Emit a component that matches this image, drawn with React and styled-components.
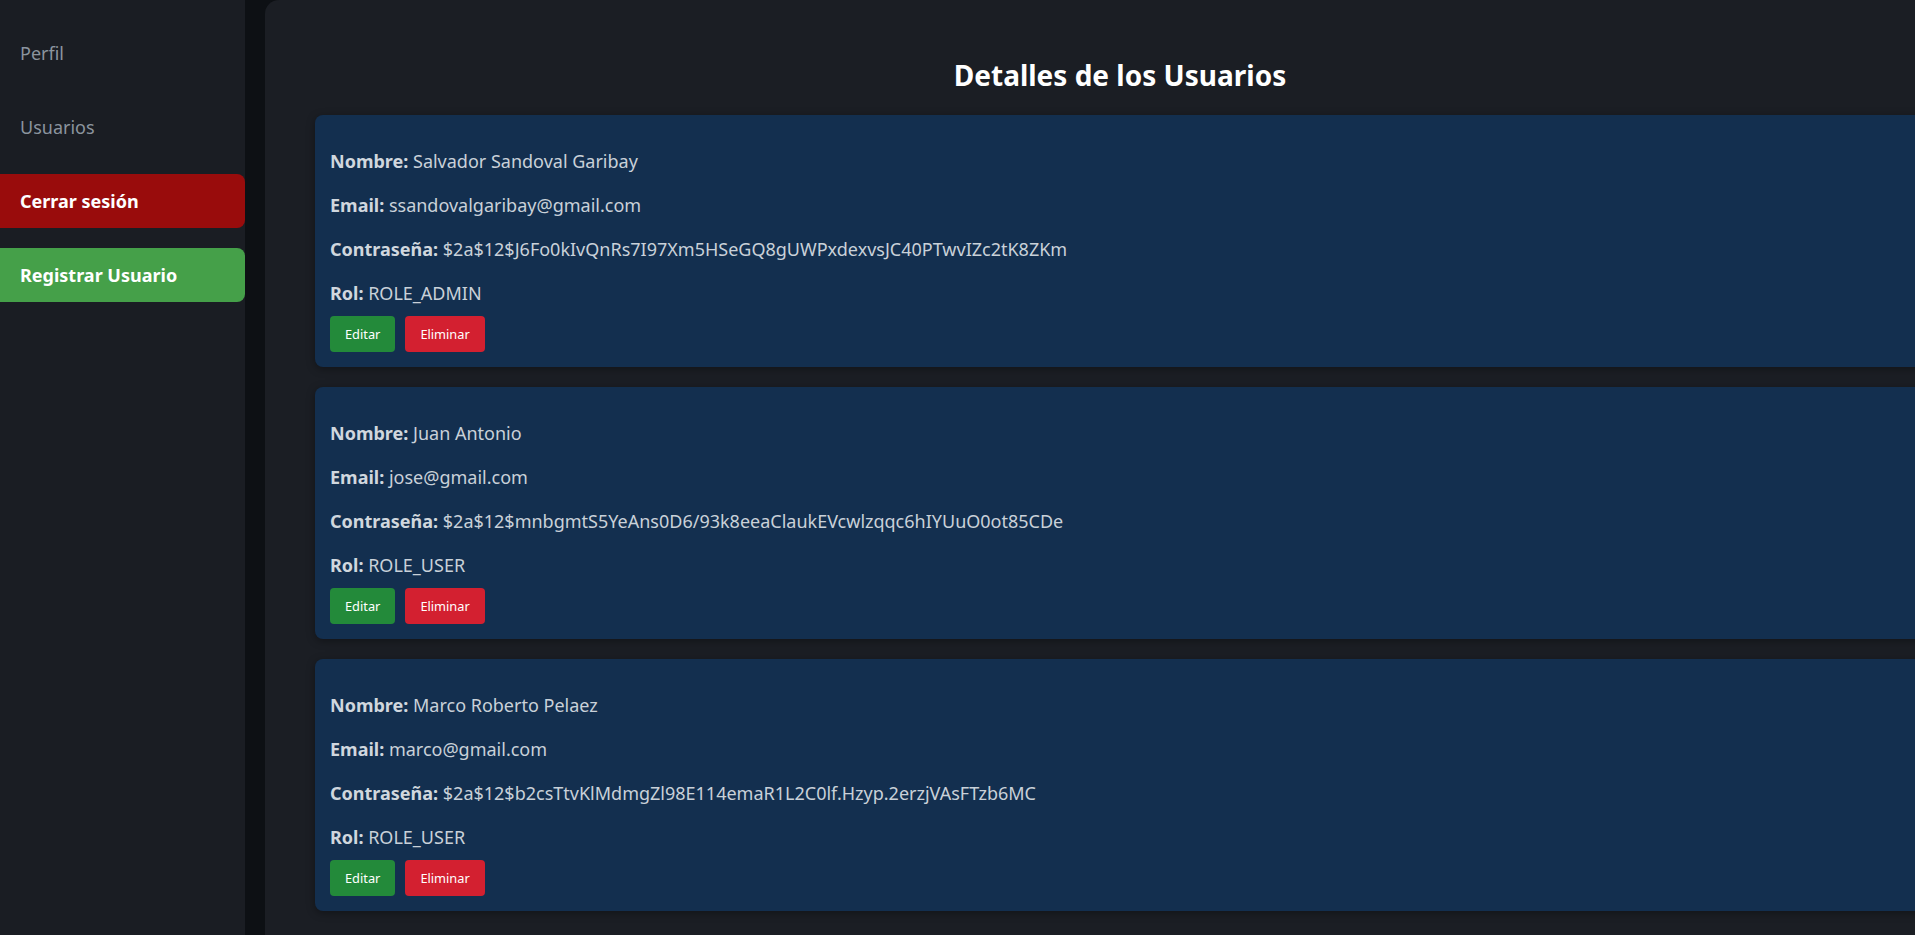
import React from "react";
import styled, { createGlobalStyle } from "styled-components";

const GlobalStyle = createGlobalStyle`
  html, body {
    margin: 0;
    padding: 0;
    background: #0d1014;
    font-family: "Noto Sans", "Open Sans", sans-serif;
    overflow: hidden;
  }
  * { box-sizing: border-box; }
`;

const Layout = styled.div`
  display: flex;
  align-items: stretch;
  min-height: 100vh;
  width: 100%;
`;

const Sidebar = styled.nav`
  flex: 0 0 245px;
  background: #1a1d23;
  padding-top: 26px;
  display: flex;
  flex-direction: column;
  gap: 20px;
`;

const NavItem = styled.a`
  height: 54px;
  display: flex;
  align-items: center;
  padding-left: 20px;
  font-size: 18px;
  text-decoration: none;
  border-radius: 0 8px 8px 0;
  color: ${(p) => (p.$bg ? "#ffffff" : "#8b949e")};
  font-weight: ${(p) => (p.$bg ? 700 : 400)};
  background: ${(p) => p.$bg || "transparent"};
`;

const Main = styled.main`
  flex: 0 0 1710px;
  margin-left: 20px;
  background: #1b1e24;
  border-top-left-radius: 14px;
  padding: 0 50px 30px;
`;

const Title = styled.h2`
  margin: 0;
  padding-top: 56px;
  text-align: center;
  font-size: 28px;
  line-height: 38px;
  font-weight: 700;
  color: #ffffff;
`;

const CardList = styled.div`
  margin-top: 21px;
  display: flex;
  flex-direction: column;
  gap: 20px;
`;

const Card = styled.section`
  background: #132f4f;
  border-radius: 8px;
  padding: 34px 15px 15px;
  box-shadow: 0 2px 8px rgba(0, 0, 0, 0.35);
  display: flex;
  flex-direction: column;
`;

const Fields = styled.div`
  display: flex;
  flex-direction: column;
  gap: 20px;
`;

const Field = styled.p`
  margin: 0;
  font-size: 18px;
  line-height: 24px;
  color: #c9d1d9;
`;

const Label = styled.strong`
  font-weight: 700;
  color: #d0d7de;
`;

const Actions = styled.div`
  display: flex;
  gap: 10px;
  margin-top: 11px;
`;

const ActionButton = styled.button`
  height: 36px;
  padding: 0 15px;
  border: none;
  border-radius: 4px;
  font-family: "Noto Sans", sans-serif;
  font-size: 12.8px;
  color: #ffffff;
  background: ${(p) => (p.$variant === "danger" ? "#d32030" : "#238a3a")};
  cursor: pointer;
`;

const users = [
  {
    nombre: "Salvador Sandoval Garibay",
    email: "ssandovalgaribay@gmail.com",
    pass: "$2a$12$J6Fo0kIvQnRs7I97Xm5HSeGQ8gUWPxdexvsJC40PTwvIZc2tK8ZKm",
    rol: "ROLE_ADMIN",
  },
  {
    nombre: "Juan Antonio",
    email: "jose@gmail.com",
    pass: "$2a$12$mnbgmtS5YeAns0D6/93k8eeaClaukEVcwlzqqc6hIYUuO0ot85CDe",
    rol: "ROLE_USER",
  },
  {
    nombre: "Marco Roberto Pelaez",
    email: "marco@gmail.com",
    pass: "$2a$12$b2csTtvKlMdmgZl98E114emaR1L2C0lf.Hzyp.2erzjVAsFTzb6MC",
    rol: "ROLE_USER",
  },
];

export default function App() {
  return (
    <>
      <GlobalStyle />
      <Layout>
        <Sidebar>
          <NavItem href="#">Perfil</NavItem>
          <NavItem href="#">Usuarios</NavItem>
          <NavItem href="#" $bg="#990c0c">Cerrar sesión</NavItem>
          <NavItem href="#" $bg="#45a049">Registrar Usuario</NavItem>
        </Sidebar>
        <Main>
          <Title>Detalles de los Usuarios</Title>
          <CardList>
            {users.map((u) => (
              <Card key={u.email}>
                <Fields>
                  <Field><Label>Nombre:</Label> {u.nombre}</Field>
                  <Field><Label>Email:</Label> {u.email}</Field>
                  <Field><Label>Contraseña:</Label> {u.pass}</Field>
                  <Field><Label>Rol:</Label> {u.rol}</Field>
                </Fields>
                <Actions>
                  <ActionButton>Editar</ActionButton>
                  <ActionButton $variant="danger">Eliminar</ActionButton>
                </Actions>
              </Card>
            ))}
          </CardList>
        </Main>
      </Layout>
    </>
  );
}
